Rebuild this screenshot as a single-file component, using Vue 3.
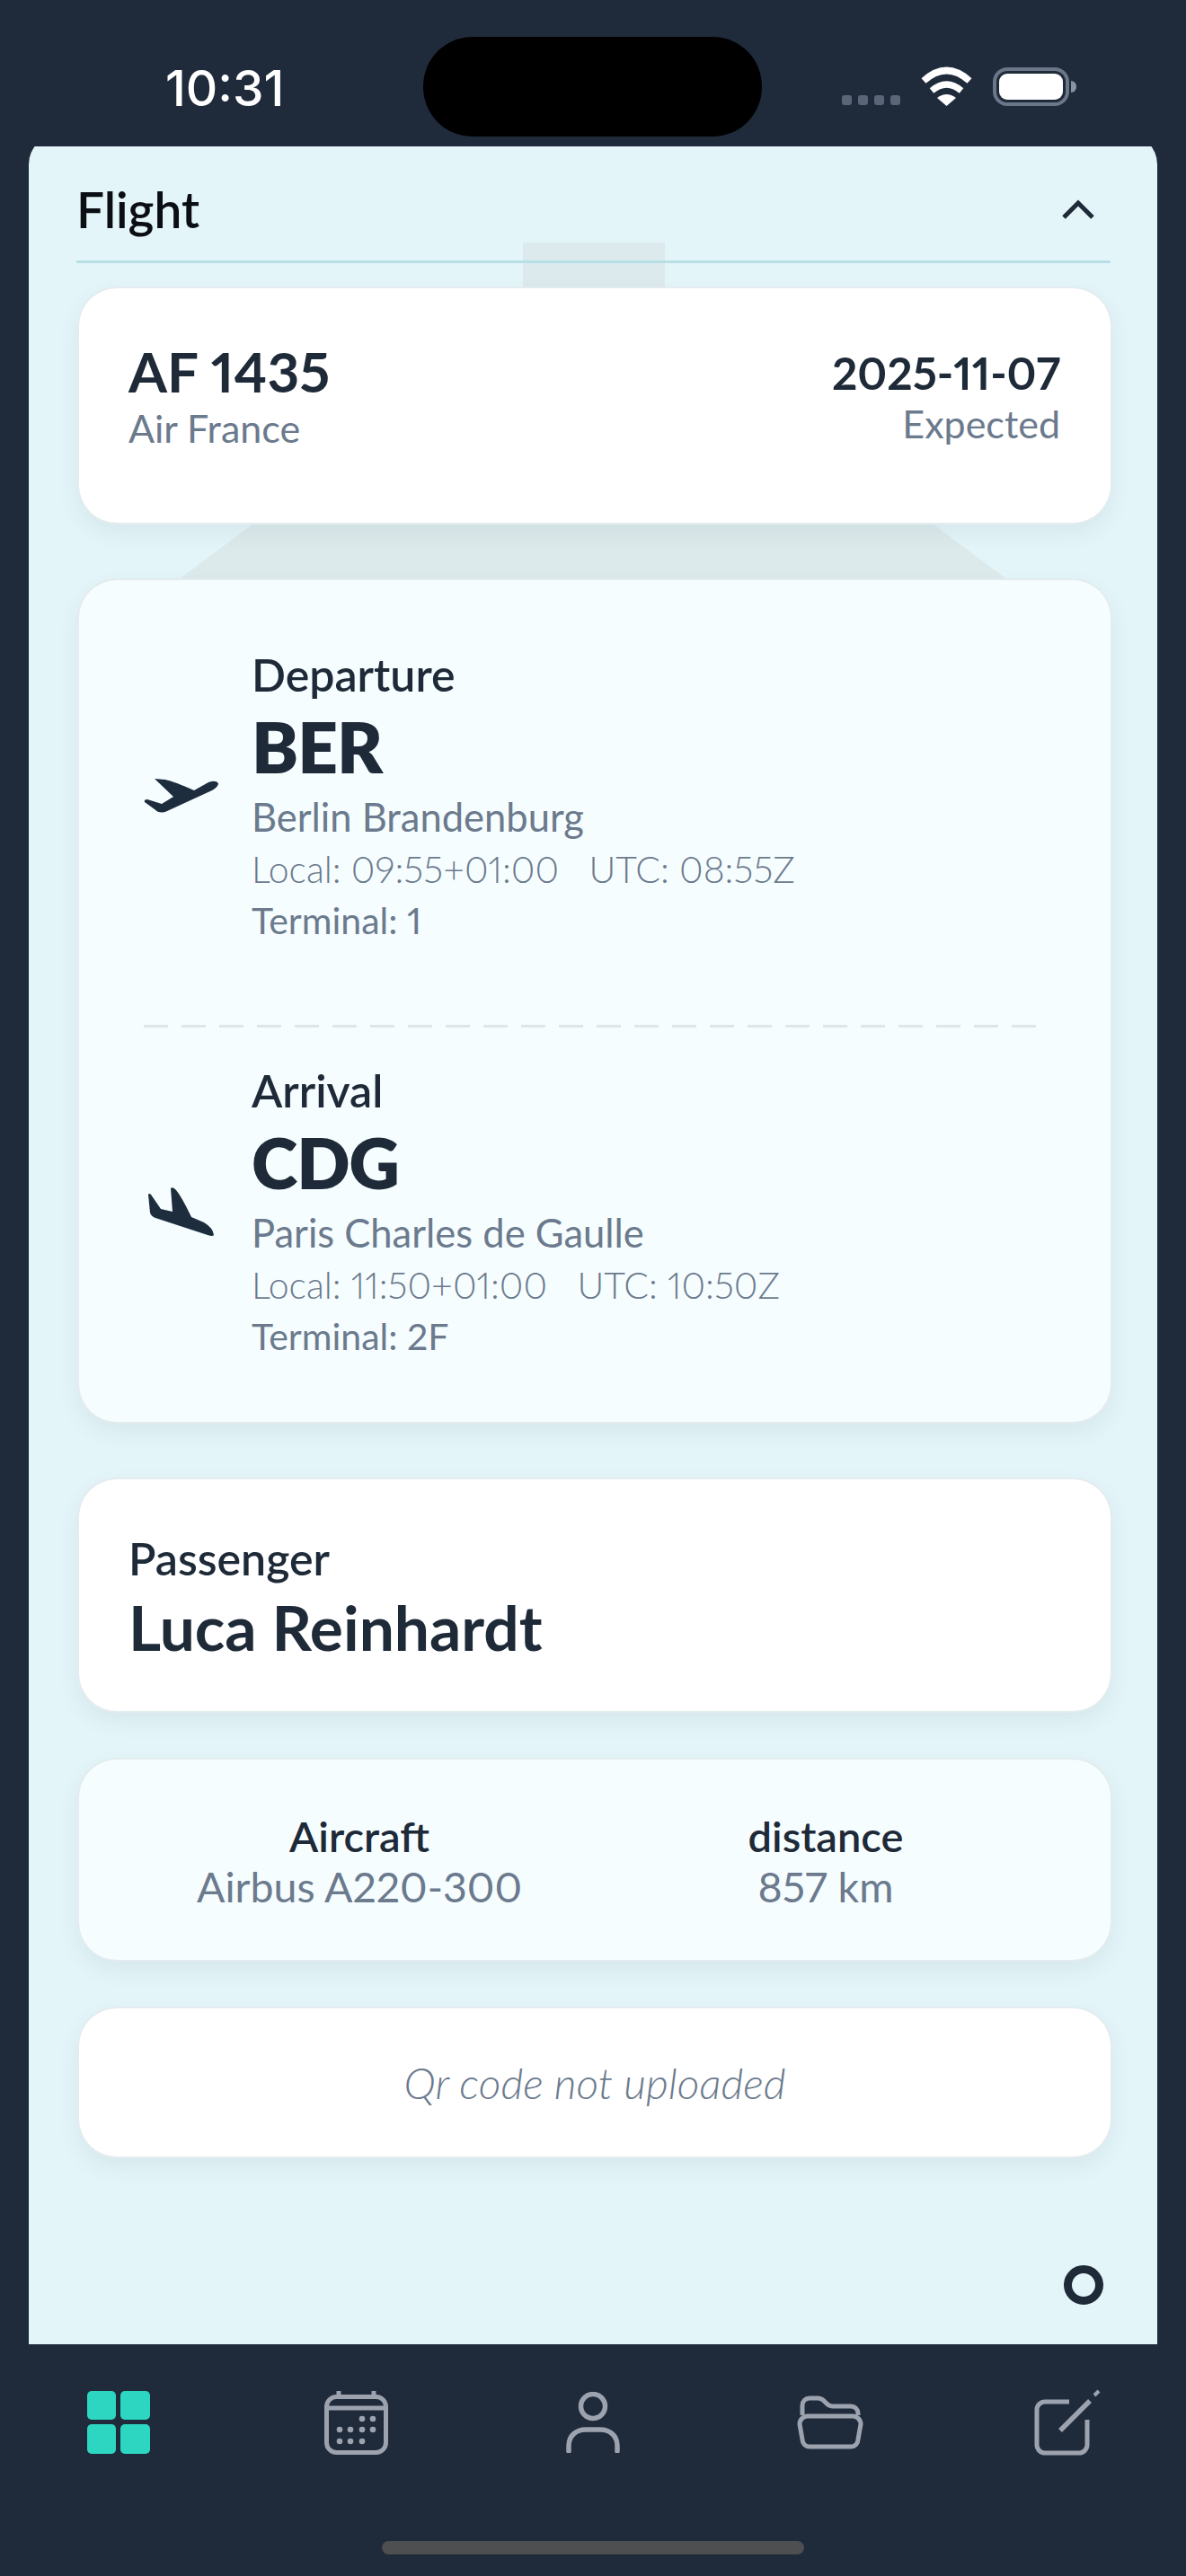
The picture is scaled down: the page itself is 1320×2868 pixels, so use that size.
<template>
  <div class="screen">
    <div class="status">
      <div class="time">10:31</div>
      <div class="island"></div>
      <div class="signal">
        <span v-for="n in 4" :key="n" class="dot"></span>
      </div>
      <svg class="wifi" width="59" height="44" viewBox="0 0 59 44">
        <path d="M4 16 Q29.500 -7 55 16" fill="none" stroke="#fff" stroke-width="7.500" />
        <path d="M13 27 Q29.500 13 46 27" fill="none" stroke="#fff" stroke-width="7" />
        <path d="M19 35 Q29.500 27 40 35 L29.500 44 Z" fill="#fff" />
      </svg>
      <div class="battery">
        <div class="battery-fill"></div>
      </div>
      <div class="battery-nub"></div>
    </div>

    <main class="panel">
      <svg class="ghost" width="1256" height="500" viewBox="0 0 1256 500">
        <rect x="550" y="107" width="158" height="60" fill="#dceaed" />
        <polygon points="257,415 999,415 1093,485 163,485" fill="#ddeaec" />
      </svg>

      <header class="panel-head">
        <h1>Flight</h1>
        <svg width="36" height="22" viewBox="0 0 36 22">
          <path d="M2 20 L18 4 L34 20" fill="none" stroke="#1e2a38" stroke-width="5" />
        </svg>
      </header>

      <section class="card flight">
        <div>
          <div class="flight-no">AF 1435</div>
          <div class="airline">Air France</div>
        </div>
        <div class="flight-right">
          <div class="date">2025-11-07</div>
          <div class="state">Expected</div>
        </div>
      </section>

      <section class="card tinted route">
        <div v-for="(leg, i) in legs" :key="leg.label">
          <div v-if="i > 0" class="dashes"></div>
          <div class="leg">
            <div class="leg-icon">
              <svg v-if="i === 0" width="83" height="39" viewBox="0 0 83 39">
                <path d="M12 0 L24 1 Q34 3 56 13 L72 4 Q80 1 83 5 Q83 9 76 13 L26 36 Q18 40 12 34 L1 26 Q0 23 4 23 L20 28 L33 20 Z" fill="#1e2d3d" />
              </svg>
              <svg v-else class="landing" width="73" height="54" viewBox="0 0 73 54">
                <path d="M0 8 Q1 6 3 8 L14 24 L27 27 L25 1 Q27 -1 30 2 Q36 8 48 33 L62 39 Q72 45 73 53 Q72 55 66 53 L8 34 Q3 32 2 28 Z" fill="#1e2d3d" />
              </svg>
            </div>
            <div>
              <div class="leg-label">{{ leg.label }}</div>
              <div class="leg-code">{{ leg.code }}</div>
              <div class="leg-airport">{{ leg.airport }}</div>
              <div class="leg-times">Local: {{ leg.local }}&nbsp;&nbsp; UTC: {{ leg.utc }}</div>
              <div class="leg-terminal">Terminal: {{ leg.terminal }}</div>
            </div>
          </div>
        </div>
      </section>

      <section class="card passenger">
        <div class="leg-label">Passenger</div>
        <div class="passenger-name">Luca Reinhardt</div>
      </section>

      <section class="card tinted facts">
        <div v-for="fact in facts" :key="fact.label" class="fact">
          <div class="fact-label">{{ fact.label }}</div>
          <div class="fact-value">{{ fact.value }}</div>
        </div>
      </section>

      <section class="card qr">Qr code not uploaded</section>

      <div class="ring"></div>
    </main>

    <nav class="tabs">
      <div class="tab">
        <svg width="70" height="70" viewBox="0 0 70 70">
          <rect x="0" y="0" width="32" height="32" rx="5" fill="#2dd6c1" />
          <rect x="37" y="0" width="33" height="32" rx="5" fill="#2dd6c1" />
          <rect x="0" y="37" width="32" height="33" rx="5" fill="#2dd6c1" />
          <rect x="37" y="37" width="33" height="33" rx="5" fill="#2dd6c1" />
        </svg>
      </div>
      <div class="tab">
        <svg width="71" height="71" viewBox="0 0 71 71" fill="none" stroke="#9ca3af" stroke-width="5">
          <rect x="2.500" y="6.500" width="66" height="62" rx="11" />
          <path d="M3 19 H68" />
          <path d="M16 0 V6 M55 0 V6" stroke-linecap="round" />
          <g fill="#9ca3af" stroke="none">
            <circle v-for="d in calendarDots" :key="d[0] + '-' + d[1]" :cx="d[0]" :cy="d[1]" r="3.300" />
          </g>
        </svg>
      </div>
      <div class="tab">
        <svg width="60" height="68" viewBox="0 0 60 68" fill="none" stroke="#9ca3af" stroke-width="5.500">
          <circle cx="30" cy="16" r="13.500" />
          <path d="M3 66 V60 C3 49 11 42 22 42 H38 C49 42 57 49 57 60 V66" stroke-linecap="round" />
        </svg>
      </div>
      <div class="tab">
        <svg width="74" height="60" viewBox="0 0 74 60" fill="none" stroke="#9ca3af" stroke-width="5">
          <path d="M6 22 V11 a8 8 0 0 1 8-8 h9 c3 0 5 1 7 3 l3 3 c2 2 4 3 7 3 H60 a8 8 0 0 1 8 8 V22" />
          <path d="M3 32 a9 9 0 0 1 9-9 H62 a9 9 0 0 1 9 9 L68 49 a8 8 0 0 1-8 8 H14 a8 8 0 0 1-8-8 Z" />
        </svg>
      </div>
      <div class="tab">
        <svg width="74" height="74" viewBox="0 0 74 74" fill="none" stroke="#9ca3af" stroke-width="5">
          <path d="M39 14 H12 a9 9 0 0 0 -9 9 V62 a9 9 0 0 0 9 9 H50 a9 9 0 0 0 9-9 V34" />
          <path d="M29 46 L62 13" stroke-width="5.500" />
          <path d="M67 7 L72 2" stroke-width="4" />
        </svg>
      </div>
    </nav>

    <div class="home-bar"></div>
  </div>
</template>

<script setup>
const legs = [
  {
    label: "Departure",
    code: "BER",
    airport: "Berlin Brandenburg",
    local: "09:55+01:00",
    utc: "08:55Z",
    terminal: "1"
  },
  {
    label: "Arrival",
    code: "CDG",
    airport: "Paris Charles de Gaulle",
    local: "11:50+01:00",
    utc: "10:50Z",
    terminal: "2F"
  }
];

const facts = [
  { label: "Aircraft", value: "Airbus A220-300" },
  { label: "distance", value: "857 km" }
];

const calendarDots = [
  [42, 31], [54, 31],
  [17, 43], [29, 43], [42, 43], [54, 43],
  [17, 56], [29, 56], [42, 56]
];
</script>

<style scoped>
.screen {
  width: 1320px;
  height: 2868px;
  background: #1f2a3b;
  font-family: Lato, "Noto Sans", sans-serif;
  font-variant-numeric: proportional-nums;
  color: #1e2a38;
  overflow: hidden;
  display: flex;
  flex-direction: column;
}

.status {
  position: relative;
  z-index: 1;
  height: 163px;
  flex: none;
  display: flex;
  align-items: flex-start;
  padding: 41px 0 0 184px;
  box-sizing: border-box;
  background: #1f2a3b;
}
.time {
  width: 287px;
  margin-top: 30px;
  font-family: Inter, sans-serif;
  font-size: 55px;
  line-height: 54px;
  font-weight: 500;
  color: #fff;
}
.island {
  width: 377px;
  height: 111px;
  border-radius: 55px;
  background: #000;
  margin-right: 89px;
}
.signal {
  display: flex;
  gap: 7px;
  margin-top: 65px;
  margin-right: 22px;
}
.dot {
  width: 11px;
  height: 11px;
  border-radius: 3px;
  background: #5a6578;
}
.wifi {
  margin-top: 33px;
  margin-right: 22px;
}
.battery {
  width: 85px;
  height: 43px;
  margin-top: 34px;
  box-sizing: border-box;
  border: 4px solid #6b7689;
  border-radius: 16px;
  padding: 3px;
}
.battery-fill {
  height: 100%;
  background: #fff;
  border-radius: 9px;
}
.battery-nub {
  width: 6px;
  height: 13px;
  margin: 49px 0 0 2px;
  background: #8a93a3;
  border-radius: 0 6px 6px 0;
}

.panel {
  position: relative;
  margin: -14px 32px 0;
  height: 2461px;
  flex: none;
  padding: 14px 52px 0 56px;
  box-sizing: border-box;
  background: #e4f5f9;
  border-radius: 34px 34px 0 0;
  display: flex;
  flex-direction: column;
}
.ghost {
  position: absolute;
  top: 14px;
  left: 0;
}
.panel-head {
  position: relative;
  height: 130px;
  flex: none;
  margin: 0 0 28px -3px;
  box-sizing: border-box;
  border-bottom: 3px solid #b7e0e6;
  display: flex;
  align-items: center;
  justify-content: space-between;
  padding: 12px 18px 0 0;
}
.panel-head h1 {
  margin: 0;
  font-size: 55px;
  font-weight: 600;
  line-height: 60px;
  color: #0b0f14;
}

.card {
  position: relative;
  flex: none;
  box-sizing: border-box;
  background: #fff;
  border-radius: 42px;
  box-shadow: 0 0 0 2px #e3ecef, 0 10px 26px rgba(30, 60, 80, 0.08);
}
.tinted {
  background: #f6fdff;
}

.flight {
  height: 261px;
  margin-bottom: 64px;
  padding: 60px 56px 0 55px;
  display: flex;
  justify-content: space-between;
}
.flight-no {
  font-size: 62px;
  line-height: 64px;
  font-weight: 700;
}
.airline,
.state {
  font-size: 43px;
  line-height: 64px;
  color: #6b7a8d;
}
.flight-right {
  padding-top: 4px;
  text-align: right;
}
.date {
  font-size: 49.500px;
  line-height: 60px;
  font-weight: 700;
}
.state {
  line-height: 54px;
}

.route {
  height: 937px;
  margin-bottom: 64px;
  padding: 75px 72px 0;
}
.leg {
  display: flex;
  align-items: center;
}
.leg-icon {
  width: 120px;
  flex: none;
  display: flex;
}
.landing {
  margin-left: 5px;
}
.leg-label {
  font-size: 50px;
  line-height: 60px;
  font-weight: 600;
}
.leg-code {
  font-size: 78px;
  line-height: 100px;
  font-weight: 800;
  letter-spacing: -1px;
}
.leg-airport {
  font-size: 43.500px;
  line-height: 56px;
  color: #6b7a8d;
}
.leg-times {
  font-size: 41px;
  line-height: 62px;
  font-weight: 300;
  color: #6b7a8d;
}
.leg-terminal {
  font-size: 41px;
  line-height: 52px;
  color: #6b7a8d;
}
.dashes {
  height: 3px;
  margin: 90px 10px 40px 0;
  background: repeating-linear-gradient(90deg, #dfe5e8 0 27px, transparent 27px 42px);
}

.passenger {
  height: 258px;
  margin-bottom: 54px;
  padding: 58px 55px 0;
}
.passenger-name {
  font-size: 69.500px;
  line-height: 92px;
  font-weight: 700;
}

.facts {
  height: 223px;
  margin-bottom: 54px;
  padding-top: 56px;
  display: grid;
  grid-template-columns: 624px 414px;
  text-align: center;
}
.fact-label {
  font-size: 47px;
  line-height: 58px;
  font-weight: 600;
}
.fact-value {
  font-size: 46.500px;
  line-height: 54px;
  color: #6b7a8d;
}

.qr {
  height: 165px;
  display: flex;
  align-items: center;
  justify-content: center;
  font-size: 48px;
  font-style: italic;
  font-weight: 300;
  color: #6b7a8d;
}

.ring {
  width: 44px;
  height: 44px;
  box-sizing: border-box;
  margin: 121px 8px 0 auto;
  border: 9px solid #1e2a38;
  border-radius: 50%;
}

.tabs {
  flex: none;
  margin-top: 50px;
  height: 72px;
  display: grid;
  grid-template-columns: repeat(5, 1fr);
}
.tab {
  display: flex;
  align-items: center;
  justify-content: center;
}
.home-bar {
  flex: none;
  width: 470px;
  height: 15px;
  margin: 97px auto 0;
  border-radius: 8px;
  background: #4e4f50;
}
</style>
